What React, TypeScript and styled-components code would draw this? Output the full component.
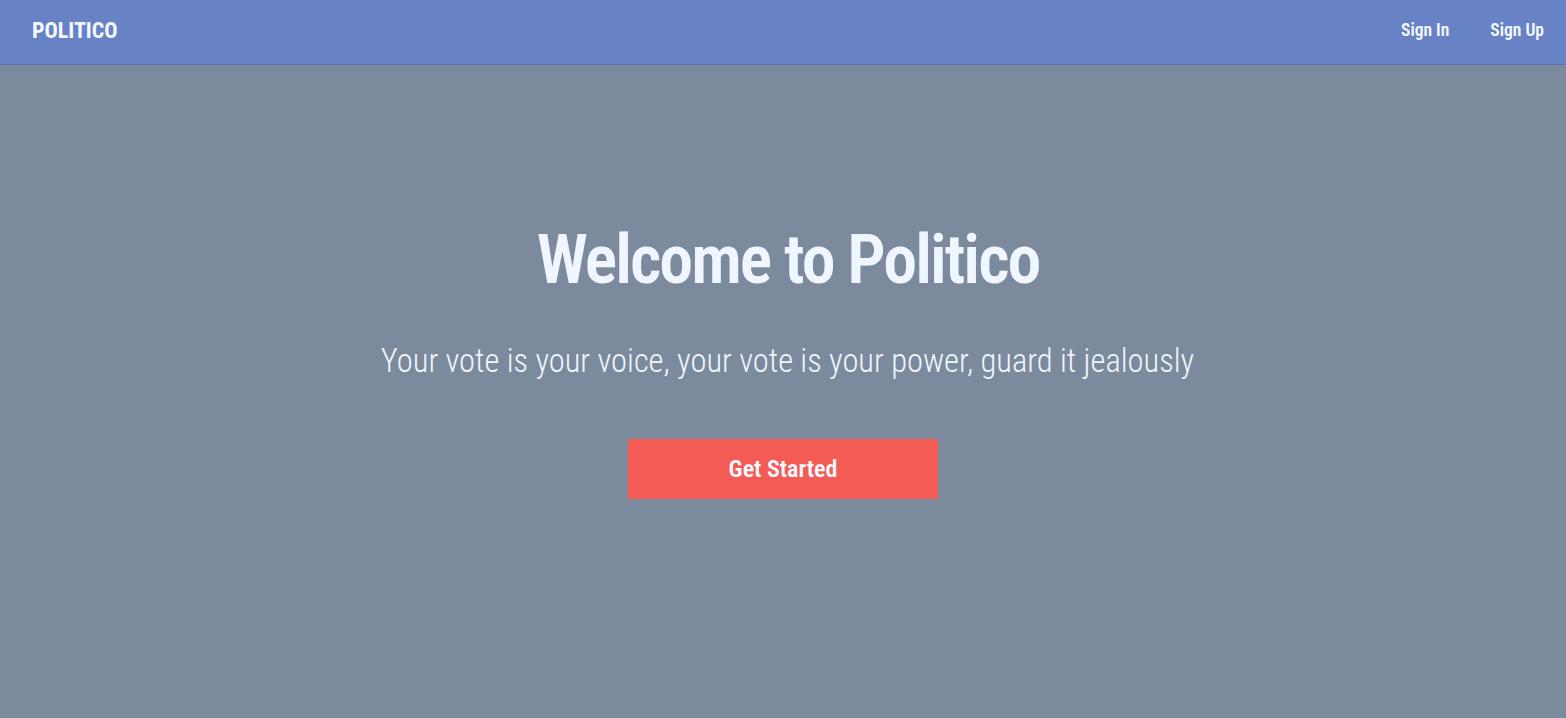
import styled, { createGlobalStyle } from "styled-components"

const GlobalStyle = createGlobalStyle`
    html, body {
        margin: 0;
        padding: 0;
    }
    body {
        font-family: "Roboto", "Liberation Sans", sans-serif;
        font-stretch: 75%;
        background-color: #7b8a9c;
        color: #f0f6ff;
    }
`

export default function App() {
    return (
        <Page>
            <GlobalStyle />
            <NavBar>
                <Logo>POLITICO</Logo>
                <NavLinks>
                    <NavLink href="#">Sign In</NavLink>
                    <NavLink href="#">Sign Up</NavLink>
                </NavLinks>
            </NavBar>
            <Hero>
                <Title>Welcome to Politico</Title>
                <Tagline>Your vote is your voice, your vote is your power, guard it jealously</Tagline>
                <StartButton>Get Started</StartButton>
            </Hero>
        </Page>
    )
}

const Page = styled.div`
    min-height: 718px;
    display: flex;
    flex-direction: column;
`

const NavBar = styled.header`
    height: 65px;
    box-sizing: border-box;
    background-color: #6783c6;
    border-bottom: 1px solid #5a72ab;
    display: flex;
    justify-content: space-between;
    align-items: center;
    padding: 0 22px 4px 32px;
`

const Logo = styled.div`
    font-size: 22px;
    font-weight: 700;
    color: #f4f8ff;
`

const NavLinks = styled.nav`
    display: flex;
    gap: 41px;
`

const NavLink = styled.a`
    font-size: 17.5px;
    font-weight: 600;
    color: #f4f8ff;
    text-decoration: none;
`

const Hero = styled.main`
    display: flex;
    flex-direction: column;
    align-items: center;
    padding-top: 161px;
`

const Title = styled.h1`
    margin: 0;
    padding-left: 10px;
    font-size: 68px;
    font-weight: 600;
    letter-spacing: -2px;
    line-height: 1;
    color: #f0f6ff;
`

const Tagline = styled.p`
    margin: 48px 0 0;
    padding-left: 9px;
    font-size: 32.5px;
    font-weight: 350;
    color: #f0f6ff;
`

const StartButton = styled.button`
    margin-top: 59px;
    width: 310px;
    height: 60px;
    border: none;
    background-color: #f35b55;
    color: #f8f8ff;
    font-family: inherit;
    font-stretch: inherit;
    font-size: 24px;
    font-weight: 600;
    cursor: pointer;
`
